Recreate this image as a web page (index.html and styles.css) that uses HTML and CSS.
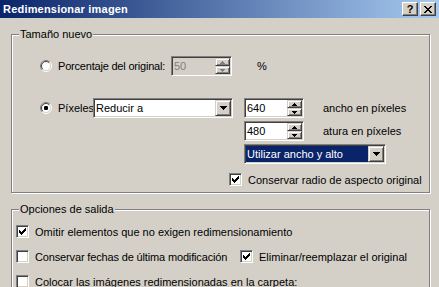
FILE: index.html
```html
<!DOCTYPE html>
<html>
<head>
<meta charset="utf-8">
<link rel="stylesheet" href="styles.css">
</head>
<body>
<div class="window">
  <div class="titlebar">
    <span class="title">Redimensionar imagen</span>
    <div class="tbtns">
      <span class="tbtn help">?</span>
      <span class="tbtn close"><svg width="8" height="7" viewBox="0 0 8 7" shape-rendering="crispEdges"><path d="M0 0h2v1H0zM6 0h2v1H6zM1 1h2v1H1zM5 1h2v1H5zM2 2h4v1H2zM3 3h2v1H3zM2 4h4v1H2zM1 5h2v1H1zM5 5h2v1H5zM0 6h2v1H0zM6 6h2v1H6z" fill="#000"/></svg></span>
    </div>
  </div>
  <div class="client">
    <div class="group g1">
      <div class="legend">Tamaño nuevo</div>
      <div class="row r1">
        <svg class="radio" width="12" height="12" viewBox="0 0 12 12"><circle cx="6" cy="6" r="5" fill="#fff"/><path d="M2.1 9.9A5.5 5.5 0 0 1 9.9 2.1" stroke="#808080" fill="none"/><path d="M9.9 2.1A5.5 5.5 0 0 1 2.1 9.9" stroke="#fff" fill="none"/><path d="M2.8 9.2A4.5 4.5 0 0 1 9.2 2.8" stroke="#404040" fill="none"/><path d="M9.2 2.8A4.5 4.5 0 0 1 2.8 9.2" stroke="#d4d0c8" fill="none"/></svg>
        <span class="lbl w-pct">Porcentaje del original:</span>
        <div class="field spin disabled w61">
          <span class="val">50</span>
          <div class="spinbtns">
            <span class="sbtn"><svg width="5" height="3" viewBox="0 0 5 3" shape-rendering="crispEdges"><path d="M2 0h1v1H2zM1 1h3v1H1zM0 2h5v1H0z" fill="#808080"/></svg></span>
            <span class="sbtn"><svg width="5" height="3" viewBox="0 0 5 3" shape-rendering="crispEdges"><path d="M0 0h5v1H0zM1 1h3v1H1zM2 2h1v1H2z" fill="#808080"/></svg></span>
          </div>
        </div>
        <span class="pct">%</span>
      </div>
      <div class="row r2">
        <svg class="radio" width="12" height="12" viewBox="0 0 12 12"><circle cx="6" cy="6" r="5" fill="#fff"/><path d="M2.1 9.9A5.5 5.5 0 0 1 9.9 2.1" stroke="#808080" fill="none"/><path d="M9.9 2.1A5.5 5.5 0 0 1 2.1 9.9" stroke="#fff" fill="none"/><path d="M2.8 9.2A4.5 4.5 0 0 1 9.2 2.8" stroke="#404040" fill="none"/><path d="M9.2 2.8A4.5 4.5 0 0 1 2.8 9.2" stroke="#d4d0c8" fill="none"/><rect x="4" y="4" width="4" height="4" rx="1.2" fill="#000"/></svg>
        <span class="lbl w-pix">Píxeles</span>
        <div class="field combo w140">
          <span class="val">Reducir a</span>
          <span class="dbtn"><svg width="7" height="4" viewBox="0 0 7 4" shape-rendering="crispEdges"><path d="M0 0h7v1H0zM1 1h5v1H1zM2 2h3v1H2zM3 3h1v1H3z" fill="#000"/></svg></span>
        </div>
        <div class="field spin w60 ml11">
          <span class="val">640</span>
          <div class="spinbtns">
            <span class="sbtn"><svg width="5" height="3" viewBox="0 0 5 3" shape-rendering="crispEdges"><path d="M2 0h1v1H2zM1 1h3v1H1zM0 2h5v1H0z" fill="#000"/></svg></span>
            <span class="sbtn"><svg width="5" height="3" viewBox="0 0 5 3" shape-rendering="crispEdges"><path d="M0 0h5v1H0zM1 1h3v1H1zM2 2h1v1H2z" fill="#000"/></svg></span>
          </div>
        </div>
        <span class="unit">ancho en píxeles</span>
      </div>
      <div class="row r3">
        <div class="field spin w60">
          <span class="val">480</span>
          <div class="spinbtns">
            <span class="sbtn"><svg width="5" height="3" viewBox="0 0 5 3" shape-rendering="crispEdges"><path d="M2 0h1v1H2zM1 1h3v1H1zM0 2h5v1H0z" fill="#000"/></svg></span>
            <span class="sbtn"><svg width="5" height="3" viewBox="0 0 5 3" shape-rendering="crispEdges"><path d="M0 0h5v1H0zM1 1h3v1H1zM2 2h1v1H2z" fill="#000"/></svg></span>
          </div>
        </div>
        <span class="unit">atura en píxeles</span>
      </div>
      <div class="row r4">
        <div class="field combo w142">
          <span class="val selected">Utilizar ancho y alto</span>
          <span class="dbtn"><svg width="7" height="4" viewBox="0 0 7 4" shape-rendering="crispEdges"><path d="M0 0h7v1H0zM1 1h5v1H1zM2 2h3v1H2zM3 3h1v1H3z" fill="#000"/></svg></span>
        </div>
      </div>
      <div class="row r5">
        <span class="check"><svg width="7" height="7" viewBox="0 0 7 7" shape-rendering="crispEdges"><path d="M6 0h1v1H6zM5 1h2v1H5zM0 2h1v1H0zM4 2h3v1H4zM0 3h2v1H0zM3 3h3v1H3zM0 4h5v1H0zM1 5h3v1H1zM2 6h1v1H2z" fill="#000"/></svg></span>
        <span class="lbl">Conservar radio de aspecto original</span>
      </div>
    </div>

    <div class="group g2">
      <div class="legend">Opciones de salida</div>
      <div class="row c1">
        <span class="check"><svg width="7" height="7" viewBox="0 0 7 7" shape-rendering="crispEdges"><path d="M6 0h1v1H6zM5 1h2v1H5zM0 2h1v1H0zM4 2h3v1H4zM0 3h2v1H0zM3 3h3v1H3zM0 4h5v1H0zM1 5h3v1H1zM2 6h1v1H2z" fill="#000"/></svg></span>
        <span class="lbl">Omitir elementos que no exigen redimensionamiento</span>
      </div>
      <div class="row c2">
        <span class="check"></span>
        <span class="lbl w-fechas">Conservar fechas de última modificación</span>
        <span class="check"><svg width="7" height="7" viewBox="0 0 7 7" shape-rendering="crispEdges"><path d="M6 0h1v1H6zM5 1h2v1H5zM0 2h1v1H0zM4 2h3v1H4zM0 3h2v1H0zM3 3h3v1H3zM0 4h5v1H0zM1 5h3v1H1zM2 6h1v1H2z" fill="#000"/></svg></span>
        <span class="lbl">Eliminar/reemplazar el original</span>
      </div>
      <div class="row c2">
        <span class="check"></span>
        <span class="lbl">Colocar las imágenes redimensionadas en la carpeta:</span>
      </div>
    </div>
  </div>
</div>
</body>
</html>
```

FILE: styles.css
```css
* { box-sizing: border-box; }
html, body { margin: 0; padding: 0; }
body {
  width: 439px;
  height: 287px;
  overflow: hidden;
  background: #d4d0c8;
  font-family: "Liberation Sans", Arial, sans-serif;
  font-size: 11px;
  color: #000;
}
.titlebar {
  height: 18px;
  display: flex;
  align-items: center;
  justify-content: space-between;
  padding: 0 3px 0 3px;
  background: linear-gradient(to right, #0a246a 0%, #a6caf0 100%);
}
.title {
  color: #fff;
  font-weight: bold;
  font-size: 11px;
  letter-spacing: 0.2px;
}
.tbtns { display: flex; gap: 2px; }
.tbtn {
  width: 16px;
  height: 14px;
  background: #d4d0c8;
  border: 1px solid;
  border-color: #fff #404040 #404040 #fff;
  box-shadow: inset -1px -1px 0 #808080;
  display: flex;
  align-items: center;
  justify-content: center;
}
.help { font-weight: bold; font-size: 11px; line-height: 12px; }
.client { padding: 16px 9px 0 11px; }
.group {
  width: 419px;
  border: 1px solid #808080;
  box-shadow: inset 1px 1px 0 #fff, 1px 1px 0 #fff;
}
.g1 { height: 159px; }
.g2 { margin-top: 16px; height: 78px; border-bottom: none; }
.legend {
  width: max-content;
  margin: -7px 0 0 7px;
  padding: 0 1px;
  line-height: 13px;
  background: #d4d0c8;
}
.row { display: flex; align-items: center; height: 20px; }
.r1 { margin-top: 15px; padding-left: 28px; }
.r2 { margin-top: 22px; padding-left: 28px; }
.r3 { margin-top: 3px; padding-left: 232px; }
.r4 { margin-top: 3px; padding-left: 232px; }
.r5 { margin-top: 9px; height: 13px; padding-left: 217px; }
.c1 { margin-top: 9px; height: 13px; padding-left: 4px; }
.c2 { margin-top: 12px; height: 13px; padding-left: 4px; }
.radio { flex: none; }
.lbl { margin-left: 6px; white-space: nowrap; }
.w-pct { width: 113px; flex: none; letter-spacing: -0.2px; }
.w-pix { width: 35px; flex: none; }
.w-fechas { width: 205px; flex: none; letter-spacing: -0.15px; }
.pct { margin-left: 25px; }
.unit { margin-left: 19px; white-space: nowrap; }
.ml11 { margin-left: 11px; }
.field {
  flex: none;
  height: 20px;
  display: flex;
  align-items: stretch;
  background: #fff;
  border: 1px solid;
  border-color: #808080 #fff #fff #808080;
  box-shadow: inset 1px 1px 0 #404040, inset -1px -1px 0 #d4d0c8;
  padding: 1px;
}
.field.disabled { background: #d4d0c8; color: #808080; }
.w60 { width: 60px; }
.w61 { width: 61px; }
.w140 { width: 140px; }
.w142 { width: 142px; }
.val {
  flex: 1;
  display: flex;
  align-items: center;
  padding-left: 1px;
  white-space: nowrap;
  overflow: hidden;
}
.val.selected { background: #0a246a; color: #fff; }
.spinbtns { display: flex; flex-direction: column; width: 15px; }
.sbtn, .dbtn {
  background: #d4d0c8;
  border: 1px solid;
  border-color: #d4d0c8 #404040 #404040 #d4d0c8;
  box-shadow: inset 1px 1px 0 #fff, inset -1px -1px 0 #808080;
  display: flex;
  align-items: center;
  justify-content: center;
}
.sbtn { height: 8px; }
.sbtn svg { display: block; }
.dbtn { width: 16px; }
.dbtn svg { display: block; }
.check {
  flex: none;
  width: 13px;
  height: 13px;
  background: #fff;
  border: 1px solid;
  border-color: #808080 #fff #fff #808080;
  box-shadow: inset 1px 1px 0 #404040, inset -1px -1px 0 #d4d0c8;
  padding: 2px;
  display: flex;
}
.check svg { display: block; }
```
